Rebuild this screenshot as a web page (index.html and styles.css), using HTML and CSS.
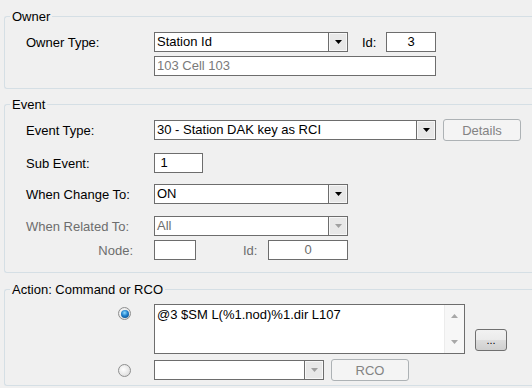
FILE: index.html
```html
<!DOCTYPE html>
<html lang="en">
<head>
    <meta charset="UTF-8">
    <title>Event Settings</title>
    <link rel="stylesheet" href="styles.css">
</head>
<body>
    <!-- OWNER -->
    <fieldset class="group group-owner">
        <legend>Owner</legend>
        <div class="row">
            <span class="label">Owner Type:</span>
            <div class="combo w-194">
                <span class="combo-text">Station Id</span>
                <span class="combo-btn"><svg width="7" height="4" viewBox="0 0 7 4"><polygon points="0,0 7,0 3.5,4" fill="#000"/></svg></span>
            </div>
            <span class="label-id">Id:</span>
            <div class="textbox w-50 center">3</div>
        </div>
        <div class="row row-gap4">
            <span class="label"></span>
            <div class="textbox w-282 disabled">103 Cell 103</div>
        </div>
    </fieldset>

    <!-- EVENT -->
    <fieldset class="group group-event">
        <legend>Event</legend>
        <div class="row row-event">
            <span class="label">Event Type:</span>
            <div class="combo w-282">
                <span class="combo-text">30 - Station DAK key as RCI</span>
                <span class="combo-btn"><svg width="7" height="4" viewBox="0 0 7 4"><polygon points="0,0 7,0 3.5,4" fill="#000"/></svg></span>
            </div>
            <button class="btn btn-disabled btn-details">Details</button>
        </div>
        <div class="row row-sub">
            <span class="label">Sub Event:</span>
            <div class="textbox w-49">&nbsp;1</div>
        </div>
        <div class="row row-change">
            <span class="label">When Change To:</span>
            <div class="combo w-194">
                <span class="combo-text">ON</span>
                <span class="combo-btn"><svg width="7" height="4" viewBox="0 0 7 4"><polygon points="0,0 7,0 3.5,4" fill="#000"/></svg></span>
            </div>
        </div>
        <div class="row row-related">
            <span class="label muted">When Related To:</span>
            <div class="combo w-194">
                <span class="combo-text muted">All</span>
                <span class="combo-btn"><svg width="7" height="4" viewBox="0 0 7 4"><polygon points="0,0 7,0 3.5,4" fill="#a0a0a0"/></svg></span>
            </div>
        </div>
        <div class="row row-gap4">
            <span class="label label-right muted">Node:</span>
            <div class="textbox w-42"></div>
            <span class="label-id label-node-id muted">Id:</span>
            <div class="textbox w-80 center muted">0</div>
        </div>
    </fieldset>

    <!-- ACTION -->
    <fieldset class="group group-action">
        <legend>Action: Command or RCO</legend>
        <div class="row row-command">
            <span class="label radio-col"><span class="radio checked"></span></span>
            <div class="textarea">
                <div class="textarea-text">@3 $SM L(%1.nod)%1.dir L107</div>
                <div class="scrollbar">
                    <svg width="7" height="4" viewBox="0 0 7 4"><polygon points="3.5,0 7,4 0,4" fill="#a8a8a8"/></svg>
                    <svg width="7" height="4" viewBox="0 0 7 4"><polygon points="0,0 7,0 3.5,4" fill="#a8a8a8"/></svg>
                </div>
            </div>
            <button class="btn btn-more">...</button>
        </div>
        <div class="row row-rco">
            <span class="label radio-col"><span class="radio"></span></span>
            <div class="combo w-170">
                <span class="combo-text"></span>
                <span class="combo-btn"><svg width="7" height="4" viewBox="0 0 7 4"><polygon points="0,0 7,0 3.5,4" fill="#a0a0a0"/></svg></span>
            </div>
            <button class="btn btn-disabled btn-rco">RCO</button>
        </div>
    </fieldset>
</body>
</html>
```

FILE: styles.css
```css
* {
    box-sizing: border-box;
}

body {
    margin: 0;
    width: 532px;
    height: 388px;
    overflow: hidden;
    background: #f0f0f0;
    font-family: "Liberation Sans", Arial, sans-serif;
    font-size: 13px;
    color: #000;
}

/* group boxes run off the right edge, so no right border */
.group {
    width: 528px;
    margin: 0 0 0 4px;
    padding: 0 0 12px 21px;
    border: 1px solid #d5dfe5;
    border-right: none;
    border-radius: 3px 0 0 3px;
    min-width: 0;
}

.group legend {
    margin-left: -16px;
    padding: 0 2px;
    line-height: 15px;
}

.group-owner {
    margin-top: 9px;
    padding-top: 8px;
}

.group-event {
    margin-top: 8px;
    padding-top: 7px;
}

.group-action {
    margin-top: 9px;
    padding-top: 7px;
    padding-bottom: 4px;
}

.row {
    display: flex;
    align-items: center;
}

.row-gap4 {
    margin-top: 4px;
}

.row-event {
    height: 22px;
}

.row-sub {
    margin-top: 12px;
}

.row-change {
    margin-top: 11px;
}

.row-related {
    margin-top: 12px;
}

.row-command {
    align-items: flex-start;
}

.row-rco {
    margin-top: 5px;
    height: 22px;
}

.label {
    width: 128px;
    flex-shrink: 0;
}

.label-right {
    text-align: right;
    padding-right: 21px;
}

.label-id {
    width: 24px;
    margin-left: 14px;
}

.label-node-id {
    width: 25px;
    margin-left: 47px;
}

.muted {
    color: #6d6d6d;
}

.w-42 { width: 42px; }
.w-49 { width: 49px; }
.w-50 { width: 50px; }
.w-80 { width: 80px; }
.w-170 { width: 170px; }
.w-194 { width: 194px; }
.w-282 { width: 282px; }

.textbox {
    height: 20px;
    line-height: 18px;
    padding: 0 2px;
    border: 1px solid #6d6d6d;
    background: #fff;
    white-space: nowrap;
}

.textbox.center {
    text-align: center;
}

.textbox.disabled {
    color: #7a7a7a;
}

.combo {
    display: flex;
    height: 20px;
    border: 1px solid #6d6d6d;
    background: #fff;
}

.combo-text {
    flex: 1;
    line-height: 18px;
    padding-left: 2px;
    white-space: nowrap;
    overflow: hidden;
}

.combo-btn {
    width: 19px;
    display: flex;
    align-items: center;
    justify-content: center;
    border-left: 1px solid #6d6d6d;
    background: #e8e8e8;
    box-shadow: inset 0 0 0 1px #f7f7f7;
}

.btn {
    font-family: inherit;
    font-size: 13px;
    height: 22px;
    width: 78px;
    padding: 0;
    border-radius: 3px;
}

.btn-disabled {
    border: 1px solid #adb2b5;
    background: #f4f4f4;
    color: #838383;
}

.btn-details {
    margin-left: 7px;
}

.btn-rco {
    margin-left: 7px;
}

.btn-more {
    width: 32px;
    margin-left: 10px;
    margin-top: 25px;
    border: 1px solid #707070;
    background: linear-gradient(#f2f2f2 0%, #ebebeb 50%, #dddddd 51%, #cfcfcf 100%);
    color: #000;
    font-size: 11px;
    line-height: 20px;
}

.radio-col {
    display: flex;
    justify-content: flex-end;
    padding-right: 23px;
}

.row-command .radio-col {
    padding-top: 3px;
}

.radio {
    width: 13px;
    height: 13px;
    border-radius: 50%;
    border: 1px solid #8e8f8f;
    background: radial-gradient(circle at 40% 40%, #ffffff 0%, #e6e6e6 60%, #cfcfcf 100%);
    position: relative;
}

.radio.checked::after {
    content: "";
    position: absolute;
    left: 1.5px;
    top: 1.5px;
    width: 8px;
    height: 8px;
    border-radius: 50%;
    background: radial-gradient(circle at 45% 35%, #8fdcff 0%, #1f7fcc 45%, #0a3f73 100%);
}

.textarea {
    display: flex;
    width: 311px;
    height: 50px;
    border: 1px solid #6d6d6d;
    background: #fff;
}

.textarea-text {
    flex: 1;
    padding: 2px 0 0 2px;
    line-height: 15px;
}

.scrollbar {
    width: 20px;
    display: flex;
    flex-direction: column;
    justify-content: space-between;
    align-items: center;
    padding: 9px 0 9px;
    background: #f7f7f7;
    border-left: 1px solid #ececec;
}
```
